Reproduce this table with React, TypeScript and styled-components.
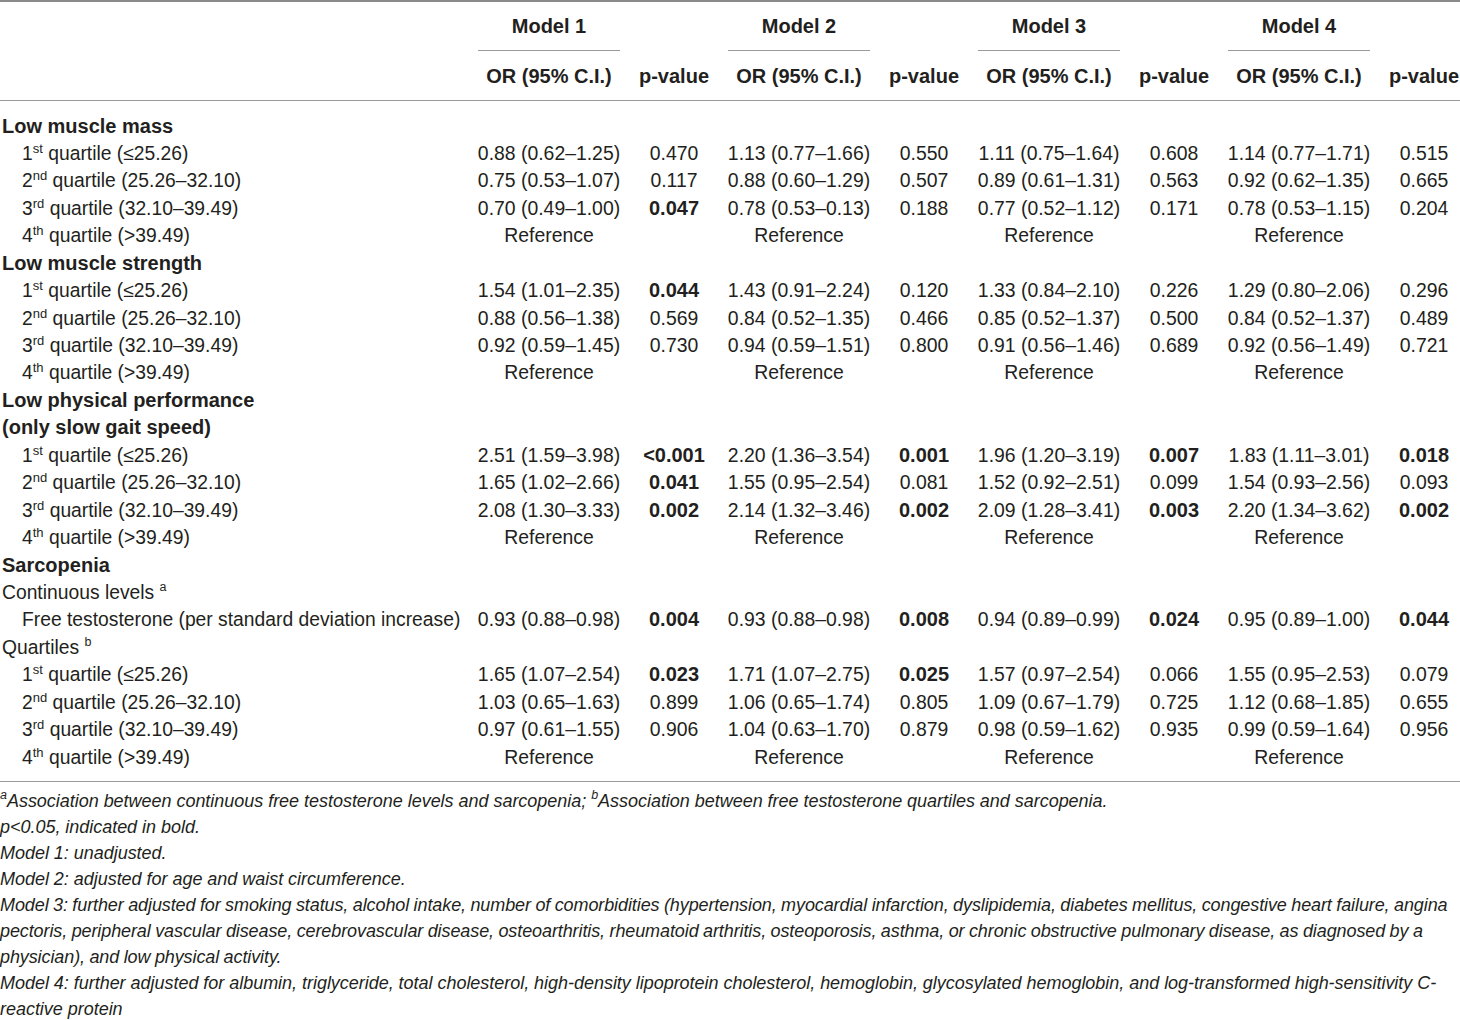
import React from "react";
import styled, { createGlobalStyle } from "styled-components";

type Cell = [string, string, boolean?];
type Row =
  | { kind: "group"; label: string }
  | { kind: "sub"; label: string; note?: string }
  | { kind: "data"; label: React.ReactNode; cells: Cell[] | "ref" };

function Quartile({ n, sup, rest }: { n: string; sup: string; rest: string }) {
  return (
    <>
      {n}
      <Sup>{sup}</Sup> quartile {rest}
    </>
  );
}

const q1 = <Quartile n="1" sup="st" rest="(≤25.26)" />;
const q2 = <Quartile n="2" sup="nd" rest="(25.26–32.10)" />;
const q3 = <Quartile n="3" sup="rd" rest="(32.10–39.49)" />;
const q4 = <Quartile n="4" sup="th" rest="(>39.49)" />;

const rows: Row[] = [
  { kind: "group", label: "Low muscle mass" },
  {
    kind: "data",
    label: q1,
    cells: [
      ["0.88 (0.62–1.25)", "0.470"],
      ["1.13 (0.77–1.66)", "0.550"],
      ["1.11 (0.75–1.64)", "0.608"],
      ["1.14 (0.77–1.71)", "0.515"],
    ],
  },
  {
    kind: "data",
    label: q2,
    cells: [
      ["0.75 (0.53–1.07)", "0.117"],
      ["0.88 (0.60–1.29)", "0.507"],
      ["0.89 (0.61–1.31)", "0.563"],
      ["0.92 (0.62–1.35)", "0.665"],
    ],
  },
  {
    kind: "data",
    label: q3,
    cells: [
      ["0.70 (0.49–1.00)", "0.047", true],
      ["0.78 (0.53–0.13)", "0.188"],
      ["0.77 (0.52–1.12)", "0.171"],
      ["0.78 (0.53–1.15)", "0.204"],
    ],
  },
  { kind: "data", label: q4, cells: "ref" },
  { kind: "group", label: "Low muscle strength" },
  {
    kind: "data",
    label: q1,
    cells: [
      ["1.54 (1.01–2.35)", "0.044", true],
      ["1.43 (0.91–2.24)", "0.120"],
      ["1.33 (0.84–2.10)", "0.226"],
      ["1.29 (0.80–2.06)", "0.296"],
    ],
  },
  {
    kind: "data",
    label: q2,
    cells: [
      ["0.88 (0.56–1.38)", "0.569"],
      ["0.84 (0.52–1.35)", "0.466"],
      ["0.85 (0.52–1.37)", "0.500"],
      ["0.84 (0.52–1.37)", "0.489"],
    ],
  },
  {
    kind: "data",
    label: q3,
    cells: [
      ["0.92 (0.59–1.45)", "0.730"],
      ["0.94 (0.59–1.51)", "0.800"],
      ["0.91 (0.56–1.46)", "0.689"],
      ["0.92 (0.56–1.49)", "0.721"],
    ],
  },
  { kind: "data", label: q4, cells: "ref" },
  { kind: "group", label: "Low physical performance" },
  { kind: "group", label: "(only slow gait speed)" },
  {
    kind: "data",
    label: q1,
    cells: [
      ["2.51 (1.59–3.98)", "<0.001", true],
      ["2.20 (1.36–3.54)", "0.001", true],
      ["1.96 (1.20–3.19)", "0.007", true],
      ["1.83 (1.11–3.01)", "0.018", true],
    ],
  },
  {
    kind: "data",
    label: q2,
    cells: [
      ["1.65 (1.02–2.66)", "0.041", true],
      ["1.55 (0.95–2.54)", "0.081"],
      ["1.52 (0.92–2.51)", "0.099"],
      ["1.54 (0.93–2.56)", "0.093"],
    ],
  },
  {
    kind: "data",
    label: q3,
    cells: [
      ["2.08 (1.30–3.33)", "0.002", true],
      ["2.14 (1.32–3.46)", "0.002", true],
      ["2.09 (1.28–3.41)", "0.003", true],
      ["2.20 (1.34–3.62)", "0.002", true],
    ],
  },
  { kind: "data", label: q4, cells: "ref" },
  { kind: "group", label: "Sarcopenia" },
  { kind: "sub", label: "Continuous levels", note: "a" },
  {
    kind: "data",
    label: "Free testosterone (per standard deviation increase)",
    cells: [
      ["0.93 (0.88–0.98)", "0.004", true],
      ["0.93 (0.88–0.98)", "0.008", true],
      ["0.94 (0.89–0.99)", "0.024", true],
      ["0.95 (0.89–1.00)", "0.044", true],
    ],
  },
  { kind: "sub", label: "Quartiles", note: "b" },
  {
    kind: "data",
    label: q1,
    cells: [
      ["1.65 (1.07–2.54)", "0.023", true],
      ["1.71 (1.07–2.75)", "0.025", true],
      ["1.57 (0.97–2.54)", "0.066"],
      ["1.55 (0.95–2.53)", "0.079"],
    ],
  },
  {
    kind: "data",
    label: q2,
    cells: [
      ["1.03 (0.65–1.63)", "0.899"],
      ["1.06 (0.65–1.74)", "0.805"],
      ["1.09 (0.67–1.79)", "0.725"],
      ["1.12 (0.68–1.85)", "0.655"],
    ],
  },
  {
    kind: "data",
    label: q3,
    cells: [
      ["0.97 (0.61–1.55)", "0.906"],
      ["1.04 (0.63–1.70)", "0.879"],
      ["0.98 (0.59–1.62)", "0.935"],
      ["0.99 (0.59–1.64)", "0.956"],
    ],
  },
  { kind: "data", label: q4, cells: "ref" },
];

const models = ["Model 1", "Model 2", "Model 3", "Model 4"];

export default function App() {
  return (
    <>
      <GlobalStyle />
      <Page>
        <Table>
          <colgroup>
            <col style={{ width: 469 }} />
            {models.map((m) => (
              <React.Fragment key={m}>
                <col style={{ width: 160 }} />
                <col style={{ width: 90 }} />
              </React.Fragment>
            ))}
          </colgroup>
          <thead>
            <ModelRow>
              <th />
              {models.map((m) => (
                <React.Fragment key={m}>
                  <th>
                    <ModelTitle>{m}</ModelTitle>
                  </th>
                  <th />
                </React.Fragment>
              ))}
            </ModelRow>
            <ColumnRow>
              <th />
              {models.map((m) => (
                <React.Fragment key={m}>
                  <th>OR (95% C.I.)</th>
                  <th>p-value</th>
                </React.Fragment>
              ))}
            </ColumnRow>
          </thead>
          <tbody>
            {rows.map((r, i) => {
              if (r.kind === "group")
                return (
                  <BodyRow key={i}>
                    <GroupCell colSpan={9}>{r.label}</GroupCell>
                  </BodyRow>
                );
              if (r.kind === "sub")
                return (
                  <BodyRow key={i}>
                    <SubCell colSpan={9}>
                      {r.label} <Note>{r.note}</Note>
                    </SubCell>
                  </BodyRow>
                );
              return (
                <BodyRow key={i}>
                  <LabelCell>{r.label}</LabelCell>
                  {r.cells === "ref"
                    ? models.map((m) => (
                        <React.Fragment key={m}>
                          <ValueCell>Reference</ValueCell>
                          <ValueCell />
                        </React.Fragment>
                      ))
                    : r.cells.map(([or, p, bold], j) => (
                        <React.Fragment key={j}>
                          <ValueCell>{or}</ValueCell>
                          <ValueCell $bold={bold}>{p}</ValueCell>
                        </React.Fragment>
                      ))}
                </BodyRow>
              );
            })}
          </tbody>
        </Table>
        <Footnotes>
          <p>
            <Note>a</Note>Association between continuous free testosterone
            levels and sarcopenia; <Note>b</Note>Association between free
            testosterone quartiles and sarcopenia.
          </p>
          <p>p&lt;0.05, indicated in bold.</p>
          <p>Model 1: unadjusted.</p>
          <p>Model 2: adjusted for age and waist circumference.</p>
          <Tight>
            Model 3: further adjusted for smoking status, alcohol intake, number
            of comorbidities (hypertension, myocardial infarction,
            dyslipidemia, diabetes mellitus, congestive heart failure, angina
            <br />
            pectoris, peripheral vascular disease, cerebrovascular disease,
            osteoarthritis, rheumatoid arthritis, osteoporosis, asthma, or
            chronic obstructive pulmonary disease, as diagnosed by a
            <br />
            physician), and low physical activity.
          </Tight>
          <p>
            Model 4: further adjusted for albumin, triglyceride, total
            cholesterol, high-density lipoprotein cholesterol, hemoglobin,
            glycosylated hemoglobin, and log-transformed high-sensitivity C-
            <br />
            reactive protein
          </p>
        </Footnotes>
      </Page>
    </>
  );
}

const GlobalStyle = createGlobalStyle`
  html, body {
    margin: 0;
    padding: 0;
    background: #ffffff;
  }
  body {
    font-family: "Liberation Sans", Arial, sans-serif;
    color: #231f20;
    overflow: hidden;
  }
`;

const Page = styled.div`
  width: 1460px;
  height: 1020px;
  overflow: hidden;
`;

const Table = styled.table`
  width: 1469px;
  table-layout: fixed;
  border-collapse: collapse;
  border-top: 2px solid #8a8a8a;
  border-bottom: 1.5px solid #9a9a9a;
  font-size: 19.3px;

  th {
    font-size: 20px;
    font-weight: bold;
    text-align: center;
    padding: 0;
    white-space: nowrap;
  }

  tbody tr:first-child td {
    padding-top: 12px;
  }

  tbody tr:last-child td {
    padding-bottom: 10px;
  }
`;

const ModelRow = styled.tr`
  height: 51px;
  th {
    vertical-align: top;
    padding-top: 13px;
  }
`;

const ModelTitle = styled.div`
  margin: 0 9px 0 9px;
  padding-bottom: 12px;
  border-bottom: 1.5px solid #9a9a9a;
`;

const ColumnRow = styled.tr`
  height: 48px;
  border-bottom: 1.5px solid #9a9a9a;
  th {
    vertical-align: middle;
    padding-top: 2px;
  }
`;

const BodyRow = styled.tr`
  td {
    line-height: 27.43px;
    padding: 0;
    white-space: nowrap;
  }
`;

const GroupCell = styled.td`
  font-weight: bold;
  font-size: 20px;
  padding-left: 2px !important;
`;

const SubCell = styled.td`
  padding-left: 2px !important;
`;

const LabelCell = styled.td`
  padding-left: 22px !important;
`;

const ValueCell = styled.td<{ $bold?: boolean }>`
  text-align: center;
  font-weight: ${({ $bold }) => ($bold ? "bold" : "normal")};
  font-size: ${({ $bold }) => ($bold ? "20px" : "19.4px")};
`;

const Sup = styled.sup`
  font-size: 13px;
  line-height: 0;
  vertical-align: 7px;
`;

const Note = styled.sup`
  font-size: 12.5px;
  line-height: 0;
  vertical-align: 8px;
`;

const Footnotes = styled.div`
  width: 1460px;
  padding-top: 6px;
  font-style: italic;
  font-size: 18px;
  letter-spacing: -0.03px;
  line-height: 26px;

  p {
    margin: 0;
  }
`;

const Tight = styled.p`
  letter-spacing: -0.1px;
  word-spacing: -0.4px;
`;
